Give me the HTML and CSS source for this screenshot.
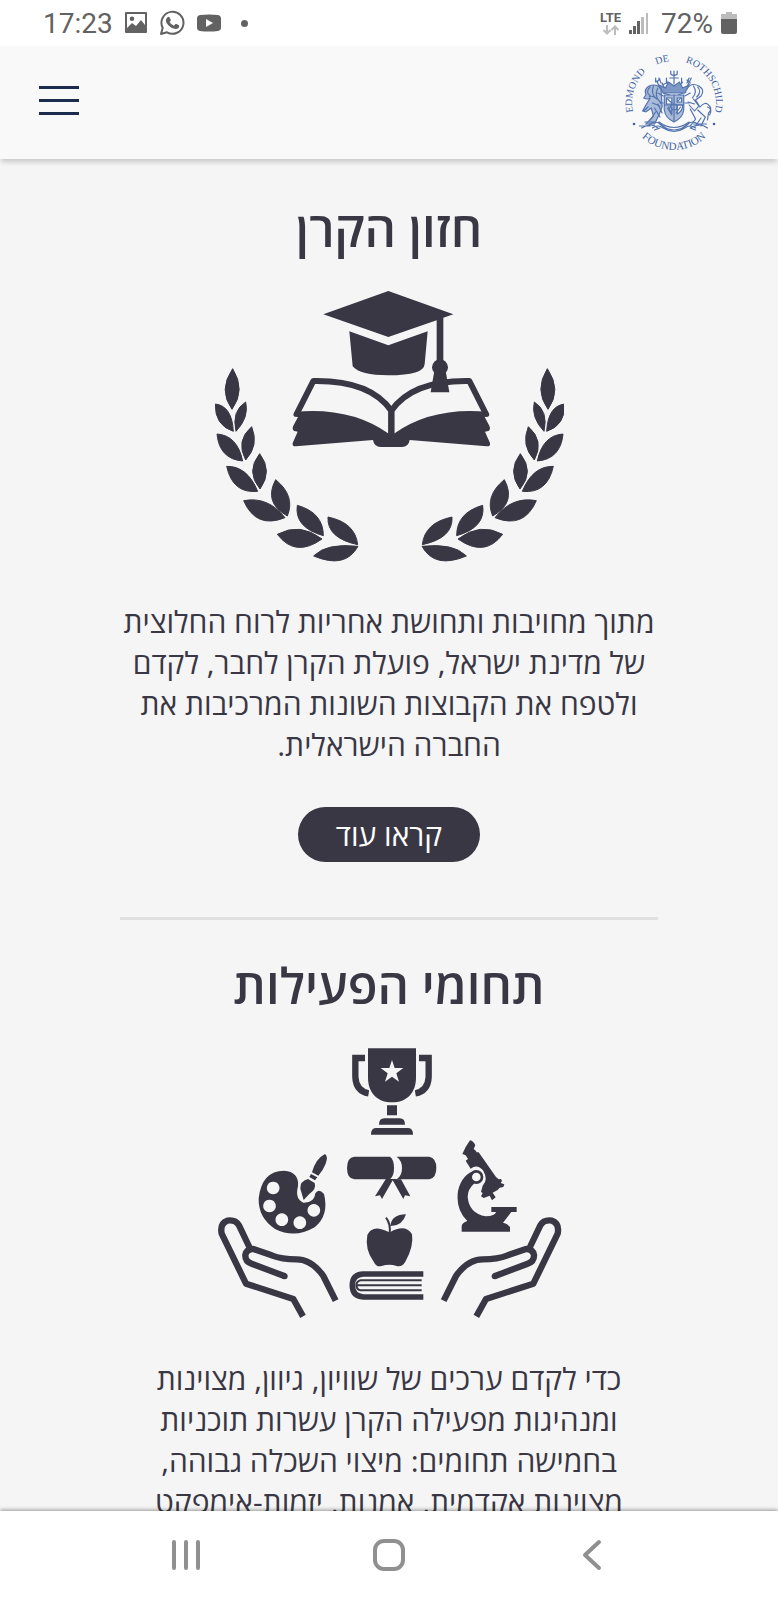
FILE: index.html
```html
<!DOCTYPE html>
<html lang="he" dir="rtl">
<head>
<meta charset="utf-8">
<meta name="viewport" content="width=device-width, initial-scale=1">
<title>Edmond de Rothschild Foundation</title>
<link rel="stylesheet" href="styles.css">
</head>
<body>
<div class="status" dir="ltr">
  <div class="status-left">
    <span class="status-text">17:23</span>
    <svg class="i-photo" width="24" height="24" viewBox="0 0 24 24"><path fill-rule="evenodd" fill="currentColor" d="M2 1h20q1 0 1 1v19q0 1-1 1H2q-1 0-1-1V2q0-1 1-1zM3 3v14l5-5 4 3 5-6 4 5V3zM8 5.500a2.300 2.300 0 1 1 0 4.600a2.300 2.300 0 0 1 0-4.600z"/></svg>
    <svg class="i-chat" width="26" height="26" viewBox="0 0 26 26"><path d="M2 24l1.700-6.200A11 11 0 1 1 8 22.300z" fill="none" stroke="currentColor" stroke-width="2" stroke-linejoin="round"/><path fill="currentColor" d="M8.500 7.300q1-1 2 0l1.300 2.600q.2.800-1.200 2.200 1.500 2.700 4.300 3.700l1.500-1.700q.6-.4 1.200 0l2.500 1.300q.6 3.300-3.600 3.600-4-.2-7.200-3.700-4.500-4.600-.8-8z"/></svg>
    <svg class="i-tube" width="26" height="20" viewBox="0 0 26 20"><path fill-rule="evenodd" fill="currentColor" d="M4 2q9-1 18 0 3 .5 3 3.500v9q0 3-3 3.500-9 1-18 0-3-.5-3-3.500v-9Q1 2.500 4 2zM10 6v8l7-4z"/></svg>
    <span class="dot"></span>
  </div>
  <div class="status-right">
    <div class="lte"><span>LTE</span>
      <svg width="18" height="10" viewBox="0 0 18 10" fill="none" stroke="#bcbcbc" stroke-width="2"><path d="M5 0v8M1.500 5L5 8.500 8.500 5M13 10V2M9.500 5L13 1.500 16.500 5"/></svg>
    </div>
    <svg class="i-signal" width="20" height="23" viewBox="0 0 20 23"><g fill="#626262"><path d="M0 18h3v4H0zM4 14h3v8H4zM8 9h3v13H8z"/></g><path fill="#bcbcbc" d="M12 5h3v17h-3zM17 1h2v21h-2z"/></svg>
    <span class="status-text">72%</span>
    <svg class="i-batt" width="16" height="24" viewBox="0 0 16 24"><path fill="#bcbcbc" d="M5 1h6v2h5v6H0V3h5z"/><path fill="#626262" d="M0 8h16v13q0 2-2 2H2q-2 0-2-2z"/></svg>
  </div>
</div>

<header class="site-header">
  <a class="logo" href="#" dir="ltr" aria-label="Edmond de Rothschild Foundation">
    <svg width="98" height="98" viewBox="-49 -49 98 98">
      <defs>
        <path id="ringTop" d="M-41 9A42 42 0 1 1 41 9"/>
        <path id="ringBottom" d="M-47 0A47 47 0 0 0 47 0"/>
      </defs>
      <g class="ring-text">
        <text><textPath href="#ringTop" startOffset="0%">EDMOND</textPath></text>
        <text><textPath href="#ringTop" startOffset="38%">DE</textPath></text>
        <text text-anchor="end"><textPath href="#ringTop" startOffset="100%">ROTHSCHILD</textPath></text>
        <text class="wide" text-anchor="middle"><textPath href="#ringBottom" startOffset="50%">FOUNDATION</textPath></text>
      </g>
      <g fill="#41639f"><circle cx="-40" cy="21" r="1.300"/><circle cx="40" cy="21" r="1.300"/></g>
      <g fill="none" stroke="#5273ae" stroke-width="1.100" stroke-linecap="round" transform="scale(1.080 1)">
        <path fill="#a9bbd9" d="M-12-14q-4-6-11-3-5 3-3 9l-2 3q3 2 6 0l-4 7-3 6 3 1 5-4 2 8-7 8h8l4-9 3-8z"/>
        <path d="M-22-16q-5 5 0 9M-19-17q-3 8 3 13M-15-15q-4 8 3 15M-23-6q3-2 6 1M-20 0l7 3M-24 4l-4 4M-18 5l5 9M-15 1l4 9M-22 17l5-8"/>
        <path d="M-30 25q9-6 15 0M-32 23h10M-27 19h9M-18 27l5-2M-13 21l4 3"/>
        <path d="M-16-22l3 7M-13-24l-3 3M-17-25v4M-11-18l4-2M-10-10l6 2M-8-13l-3-7M-5-16l-2-7"/>
        <path d="M12-14q4-7 11-3 6 4 2 10l-5 4 4 7q5-6 8-2 4 4 0 8l-1 7M31 4q5 2 2 8M18-17q4 6-1 12M22-16q4 5-1 10M18-4l5 7-4 5-5-6M22 7l7 7-4 9M15 6l5 10-5 7M25 15l-5 8M13-1l6 2"/>
        <path d="M15 25q9-6 16 0M18 21h12M13 21l-4 3M20 27l-5-2M12-23l3 3M16-25l-4 9M8-21l-4 6M11-11l-7 3"/>
        <path fill="#a9bbd9" d="M-9-8H9V7Q8 15 0 19-8 15-9 7z"/>
        <path fill="#f9f9fa" d="M-7-5h5v6h-5zM3 2h5q0 6-5 9zM-5 4h3v7zM3-5h4v4H3z"/>
        <path d="M-9 2H9M0-8v26M-6-4l4 4M6-5L3-1M-6 5l4 7M6 4l-4 6"/><circle r="3" cx="0" cy="4"/>
        <path fill="#7d98c6" d="M-10-10l-4-8 6 3 3-6 5 4 5-4 3 6 6-3-4 8z"/>
        <path d="M0-19v-13M-3-32v3q3 3 6 0v-3M-4-25h8M-12-20l-2-5M12-20l2-5M-7-20v-5M7-20v-5M-15-10l5 3M15-10l-5 3M-13 0h3M10 0h4"/>
        <path d="M-23 22q6-6 11 0 12 10 24 0 5-6 11 0M-20 25q5-4 10 0 10 7 20 0 5-4 10 0M-14 19q14 11 28 0"/>
      </g>
    </svg>
  </a>
  <button class="menu" type="button" aria-label="תפריט"><span></span><span></span><span></span></button>
</header>

<main class="content">
  <section class="block">
    <h2>חזון הקרן</h2>
    <svg class="art" viewBox="45 30 1047 816" role="img" aria-label="ספר וכובע בוגר">
      <defs><g id="laurel">
        <path d="M98 266Q138 330 96 388Q54 330 98 266zM46 372Q96 378 100 454Q44 436 46 372zM137 366Q148 412 108 454Q94 393 137 366zM51 462Q112 466 128 543Q58 537 51 462zM155 440Q178 496 137 540Q106 482 155 440zM80 559Q142 558 173 634Q98 642 80 559zM179 521Q219 573 180 627Q136 575 179 521zM131 662Q204 648 255 713Q168 748 131 662zM227 599Q287 648 262 708Q190 668 227 599zM232 763Q300 726 366 777Q286 834 232 763zM292 676Q370 698 370 767Q282 742 292 676zM341 828Q380 788 474 799Q436 868 341 828zM384 711Q466 728 473 794Q380 774 384 711z" stroke="#3a3744" stroke-width="3"/>
      </g>
      <g id="halfBook">
        <path d="M290 402L340 303Q510 300 574 392V475" fill="none" stroke="#3a3744" stroke-width="18" stroke-linejoin="round"/>
        <path d="M284 396Q450 380 564 460L575 465V501H542Q522 500 519 480L288 499Q276 500 278 489L293 455L283 453Q275 448 280 437L294 411L284 410Q276 405 284 396z"/>
      </g></defs>
      <g fill="#3a3744">
        <use href="#laurel"/><use href="#laurel" transform="translate(1140) scale(-1 1)"/>
        <use href="#halfBook"/><use href="#halfBook" transform="translate(1148) scale(-1 1)"/>
        <path d="M370 103L565 33L760 103L730 113V240H710V121L565 171z"/>
        <path d="M448 154L565 196L683 154L674 252Q672 286 565 286Q480 286 458 259z"/>
        <circle cx="720" cy="262" r="24"/><path d="M702 278H738L748 337H692z"/>
      </g>
    </svg>
    <p>מתוך מחויבות ותחושת אחריות לרוח החלוצית<br>של מדינת ישראל, פועלת הקרן לחבר, לקדם<br>ולטפח את הקבוצות השונות המרכיבות את<br>החברה הישראלית.</p>
    <a class="more" href="#">קראו עוד</a>
  </section>
  <section class="block">
    <h2>תחומי הפעילות</h2>
    <svg class="art" viewBox="45 18 1047 816" role="img" aria-label="תחומי הפעילות">
      <defs><g id="hand" fill="none" stroke="#3a3744" stroke-width="19" stroke-linejoin="round">
        <path d="M407 779L370 705Q335 655 290 655Q245 655 215 643L160 624Q140 623 136 642Q135 661 155 668L255 706"/>
        <path d="M309 826L280 774L138 728L65 578Q59 547 82 539Q106 535 117 553L148 618"/>
      </g>
      <g id="handle"><path d="M495 51H466V108Q468 150 506 157" fill="none" stroke="#3a3744" stroke-width="19"/></g></defs>
      <use href="#hand"/><use href="#hand" transform="translate(1138) scale(-1 1)"/>
      <use href="#handle"/><use href="#handle" transform="translate(1152) scale(-1 1)"/>
      <g fill="#3a3744">
        <circle cx="254" cy="706" r="9"/><circle cx="884" cy="706" r="9"/>
        <path stroke="#f5f5f5" stroke-width="10" paint-order="stroke" d="M504 22H648V110C648 155 620 184 576 184S504 155 504 110z"/>
        <path fill="#f5f5f5" d="M576 57l8 24h26l-21 16 8 25-21-15-21 15 8-25-21-16h26z"/>
        <path d="M561 193h30v30h-30zM537 251q0-19 16-19h46q16 0 16 19zM513 281q0-20 14-20h98q14 0 14 20z"/>
        <path d="M463 347H570Q582 355 582 381Q582 405 570 415H463Q441 413 441 381Q441 349 463 347z"/>
        <path d="M590 347H688Q709 351 709 381Q709 411 688 415H590Q606 404 606 381Q606 359 590 347z"/>
        <path d="M558 413L525 466L540 463L546 474L578 418L610 474L615 463L631 466L603 415z"/>
        <path fill-rule="evenodd" d="M252 389Q298 392 294 436Q284 474 310 485Q344 486 346 457Q356 441 372 459Q388 523 344 559Q284 594 225 564Q174 530 176 472Q185 390 252 389zM219 422a19 19 0 1 0 1 0zM208 476a19 19 0 1 0 1 0zM245 517a19 19 0 1 0 1 0zM299 526a19 19 0 1 0 1 0zM341 489a19 19 0 1 0 1 0z"/>
        <path d="M375 339Q385 346 377 368Q370 386 355 404L336 394Q346 354 375 339zM333 399L352 409L345 418L328 408zM324 414L344 426Q350 444 328 459L311 477Q306 460 301 443Q299 421 324 414z"/>
        <path d="M566 573Q517 548 502 582Q494 626 521 662Q530 680 545 675Q568 668 590 675Q606 679 616 662Q642 616 636 580Q616 548 571 573z"/>
        <path d="M571 555Q575 520 618 520Q607 556 571 555z"/>
      </g>
      <g fill="none" stroke="#3a3744">
        <path d="M569 580Q573 549 558 530" stroke-width="6"/>
        <path d="M670 699H490Q457 700 457 733Q457 766 490 768H670" stroke-width="17"/>
        <path d="M665 718H482Q470 720 469 733Q470 746 482 748H665M469 733H665" stroke-width="6"/>
      </g>
      <g fill="#3a3744">
        <path d="M810 298Q820 299 826 313L821 324Q828 328 830 334L836 334L888 408L896 415L903 414L906 420L902 426L913 430L910 438L899 440L893 447L878 455L887 469L876 478L869 464L851 471L843 466L848 457L843 452L848 434Q866 417 849 388Q832 368 812 383L797 359L804 354L797 343L787 339L797 318Z"/>
        <path d="M829 387Q785 399 774 450Q766 506 802 540Q786 545 785 556V572H930V559Q925 549 909 545L934 513H950V498H874V513H888Q886 525 857 526Q807 517 803 467Q804 443 822 428Z"/>
        <circle cx="829" cy="408" r="17" fill="#f5f5f5" stroke="#3a3744" stroke-width="8"/>
      </g>
    </svg>
    <p>כדי לקדם ערכים של שוויון, גיוון, מצוינות<br>ומנהיגות מפעילה הקרן עשרות תוכניות<br>בחמישה תחומים: מיצוי השכלה גבוהה,<br>מצוינות אקדמית, אמנות, יזמות-אימפקט</p>
  </section>
</main>

<nav class="system-nav" dir="ltr" aria-label="ניווט">
  <button type="button" aria-label="אחרונים"><svg width="32" height="32" viewBox="0 0 32 32"><path d="M4 3v26M16 3v26M28 3v26"/></svg></button>
  <button type="button" aria-label="בית"><svg width="32" height="32" viewBox="0 0 32 32"><rect x="2" y="2" width="28" height="28" rx="9"/></svg></button>
  <button type="button" aria-label="חזרה"><svg width="32" height="32" viewBox="0 0 32 32"><path d="M23 3L9 16l14 13"/></svg></button>
</nav>
</body>
</html>
```
FILE: styles.css
```css
* { box-sizing: border-box; }
body {
  margin: 0;
  height: 100vh;
  display: flex;
  flex-direction: column;
  background: #f5f5f5;
  color: #3a3744;
  font-family: "Open Sans", "Liberation Sans", sans-serif;
}
button { border: 0; background: none; padding: 0; }
svg { display: block; }

.status {
  flex: none;
  height: 46px;
  display: flex;
  justify-content: space-between;
  align-items: center;
  padding: 0 41px 0 43px;
  background: #fff;
  color: #626262;
}
.status-left, .status-right { display: flex; align-items: center; }
.status-left { gap: 11px; }
.status-right { gap: 8px; }
.status-text { font: 28px/46px Roboto, sans-serif; padding-top: 2px; }
.dot { width: 7px; height: 7px; border-radius: 50%; background: #626262; margin-left: 8px; }
.lte { font: bold 13px/14px Roboto, sans-serif; display: grid; justify-items: center; }
.status-right .status-text { margin-left: 4px; }

.site-header {
  flex: none;
  height: 113px;
  display: flex;
  justify-content: space-between;
  align-items: center;
  padding: 0 55px 0 39px;
  background: #f9f9fa;
  box-shadow: 0 4px 5px -1px rgba(0, 0, 0, .18);
  z-index: 1;
}
.ring-text { font: 10px "Liberation Serif", serif; fill: #41639f; }
.ring-text .wide { font-size: 11px; }
.menu { width: 40px; display: grid; gap: 10px; padding-bottom: 4px; }
.menu span { height: 3px; background: #1c2c4f; }

.content { flex: 1; min-height: 0; overflow: hidden; padding: 0 120px; }
.block { display: flex; flex-direction: column; align-items: center; text-align: center; padding: 41px 0 55px; }
.block + .block { border-top: 3px solid #e1e1e1; padding-top: 37px; }
h2 { margin: 0 0 34px; font-size: 49px; line-height: 56px; font-weight: 600; }
.art { width: 349px; max-width: 100%; }
p { margin: 39px 0 42px; font-size: 30px; line-height: 41px; white-space: nowrap; }
.more {
  padding: 0 38px;
  border-radius: 28px;
  background: #3a3744;
  color: #fff;
  font-size: 30px;
  line-height: 55px;
  text-decoration: none;
}

.system-nav {
  flex: none;
  height: 89px;
  display: flex;
  justify-content: space-between;
  align-items: center;
  padding: 0 170px 2px;
  background: #fff;
  box-shadow: 0 -1px 4px rgba(0, 0, 0, .4);
  z-index: 1;
}
.system-nav svg { fill: none; stroke: #909090; stroke-width: 4; stroke-linecap: round; stroke-linejoin: round; }
```
